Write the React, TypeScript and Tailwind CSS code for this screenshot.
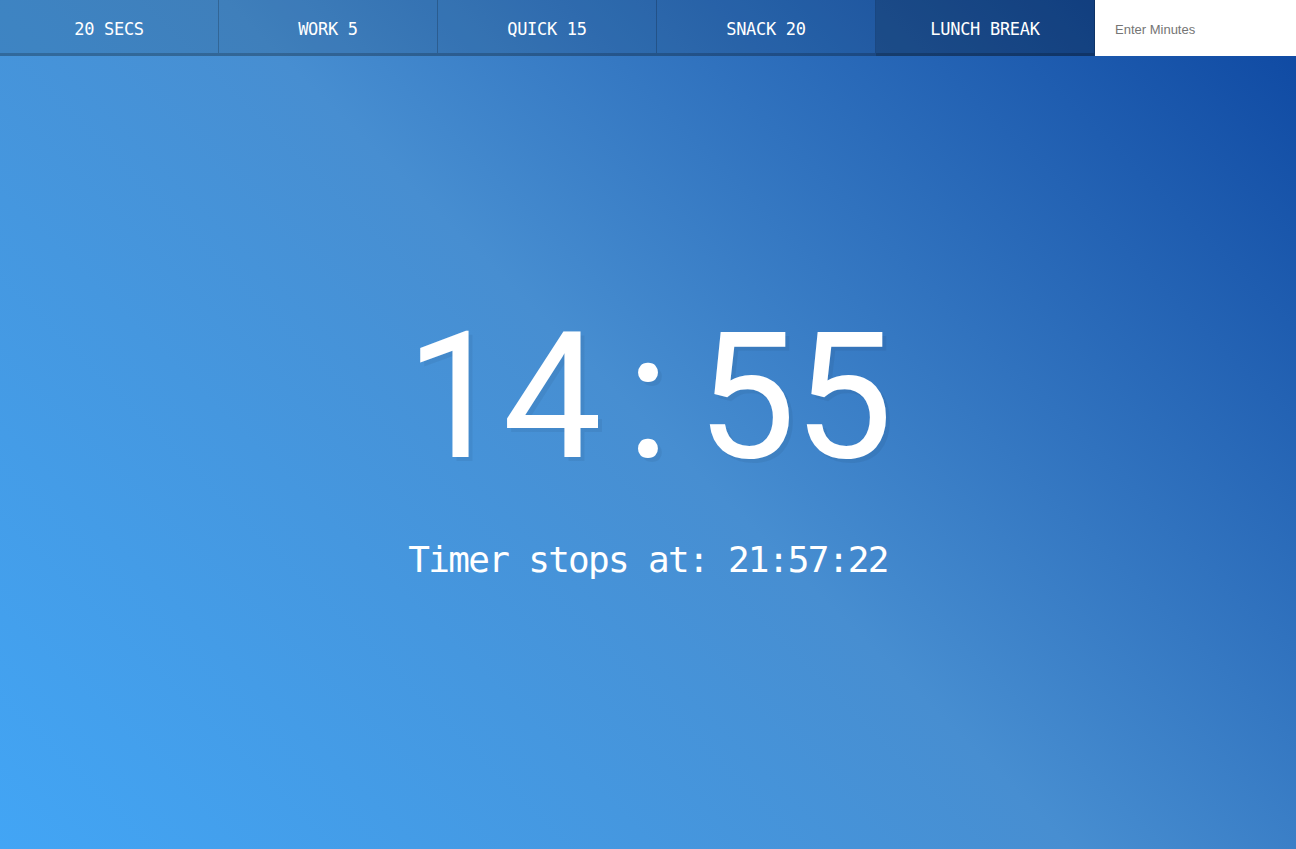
import { useState } from "react";

const presets = [
  { label: "20 Secs", secs: 20 },
  { label: "Work 5", secs: 300 },
  { label: "Quick 15", secs: 900 },
  { label: "Snack 20", secs: 1200 },
  { label: "Lunch Break", secs: 3600 },
];

const App = () => {
  const [minutes, setMinutes] = useState("");
  const timeLeft = "14:55";

  return (
    <div className="min-h-screen flex flex-col bg-[linear-gradient(45deg,#42a5f5_0%,#478ed1_50%,#0d47a1_100%)]">
      <div className="flex h-[56px]">
        {presets.map((p, i) => (
          <button
            key={p.secs}
            className={`flex-1 flex items-center justify-center pt-1.5 uppercase text-white text-[17px] tracking-[-0.3px] font-['DejaVu_Sans_Mono',monospace] border-b-[3px] border-r border-black/20 ${
              i === 4 ? "bg-black/25" : "bg-black/10"
            }`}
          >
            {p.label}
          </button>
        ))}
        <form className="w-[201px] shrink-0">
          <input
            type="text"
            value={minutes}
            onChange={(e) => setMinutes(e.target.value)}
            placeholder="Enter Minutes"
            className="w-full h-full bg-white px-5 pt-[3px] text-[13px] outline-none font-['Liberation_Sans',sans-serif] placeholder:text-[#757575]"
          />
        </form>
      </div>

      <div className="flex-1 flex flex-col items-center justify-center pb-[20px]">
        <h1 className="m-0 flex text-white text-[177px] leading-none font-normal font-['Roboto',sans-serif] [text-shadow:4px_4px_0_rgba(0,0,0,0.05)]">
          {timeLeft.split("").map((c, i) => (
            <span key={i} className="w-[97px] text-center">
              {c}
            </span>
          ))}
        </h1>
        <p className="mt-[57px] text-white text-[36px] leading-none tracking-[-1.7px] font-['DejaVu_Sans_Mono',monospace]">
          Timer stops at: 21:57:22
        </p>
      </div>
    </div>
  );
};

export default App;
